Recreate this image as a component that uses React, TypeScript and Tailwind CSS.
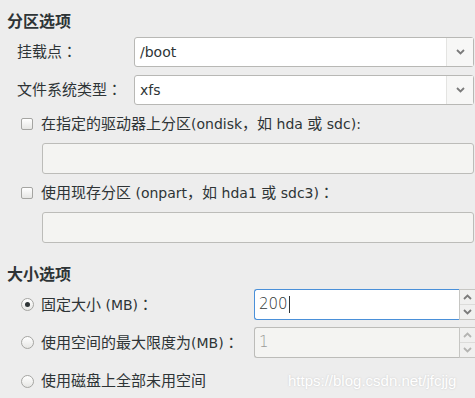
import React from 'react'

const font = { fontFamily: '"DejaVu Sans", "Noto Sans CJK SC", sans-serif' }
const cjkFont = { fontFamily: '"Noto Sans CJK SC", sans-serif' }
const colonFont = { fontFamily: '"Noto Sans CJK JP", sans-serif' }

const CJK = /([\u3000-\u303f\u4e00-\u9fff\uff00-\uffef]+)/

// CJK runs at 15px, latin runs a bit smaller, like the original GTK rendering
function Txt({ children }: { children: string }) {
  const parts = children.split(CJK).filter(Boolean)
  return (
    <span className="whitespace-pre">
      {parts.map((p, i) => {
        if (!CJK.test(p)) return <span key={i} className="text-[14px]">{p}</span>
        // full-width colon sits centred in its box in the original
        return p.split(/(：)/).filter(Boolean).map((q, j) => (
          <span key={`${i}-${j}`} className="text-[15px]" style={q === '：' ? colonFont : cjkFont}>
            {q}
          </span>
        ))
      })}
    </span>
  )
}

function Chevron({ up = false, color = '#7b7b7b' }: { up?: boolean; color?: string }) {
  return (
    <svg width="9" height="6" viewBox="0 0 9 6" className="block">
      <path d={up ? 'M1 5 L4.5 1.5 L8 5' : 'M1 1 L4.5 4.5 L8 1'} fill="none" stroke={color} strokeWidth="1.8" />
    </svg>
  )
}

function Combo({ value }: { value: string }) {
  return (
    <div className="flex h-[30px] w-[340px] rounded-[3px] border border-[#b8b8b5] bg-white">
      <div className="flex flex-1 items-center pl-[5px] text-[14px] text-[#2e3436]">{value}</div>
      <div className="flex w-[27px] items-center justify-center border-l border-[#e4e4e2] bg-[#f7f7f6]">
        <Chevron />
      </div>
    </div>
  )
}

function CheckBox() {
  return (
    <div className="h-[12px] w-[12px] rounded-[2px] border border-[#a5a5a2] bg-gradient-to-b from-white to-[#e6e6e4]" />
  )
}

function Radio({ checked = false }: { checked?: boolean }) {
  return (
    <div className="flex h-[13px] w-[13px] items-center justify-center rounded-full border border-[#a5a5a2] bg-gradient-to-b from-white to-[#e6e6e4]">
      {checked && <div className="h-[5px] w-[5px] rounded-full bg-[#2e3436]" />}
    </div>
  )
}

function Spin({ value, focused = false }: { value: string; focused?: boolean }) {
  const arrow = focused ? '#7b7b7b' : '#b4b4b2'
  return (
    <div className="flex h-[31px] w-[221px]">
      <div
        className={
          focused
            ? 'flex flex-1 items-center rounded-l-[3px] border border-r-0 border-[#4a90d9] bg-white pl-[4px] text-[15px] font-light text-[#2e3436]'
            : 'flex flex-1 items-center rounded-l-[3px] border border-r-0 border-[#bcbcb9] bg-[#f4f4f2] pl-[4px] text-[15px] font-light text-[#9a9a98]'
        }
      >
        {value}
        {focused && <span className="ml-[1px] inline-block h-[17px] w-[1px] bg-[#2e3436]" />}
      </div>
      <div className="flex w-[16px] flex-col border-y border-l border-[#c6c6c3] bg-[#f0f0ef]">
        <div className="flex flex-1 items-center justify-center border-b border-[#dcdcda]">
          <Chevron up color={arrow} />
        </div>
        <div className="flex flex-1 items-center justify-center">
          <Chevron color={arrow} />
        </div>
      </div>
    </div>
  )
}

export default function App() {
  return (
    <div className="relative h-[398px] w-[475px] overflow-hidden bg-[#ededed] text-[#2e3436]" style={font}>
      <div className="flex flex-col pt-[8px]">
        <div className="flex h-[24px] items-center pl-[7px] text-[16px] font-bold" style={cjkFont}>
          分区选项
        </div>

        <div className="mt-[5px] flex items-center">
          <div className="w-[134px] pl-[17px]">
            <Txt>挂载点：</Txt>
          </div>
          <Combo value="/boot" />
        </div>
        <div className="mt-[8px] flex items-center">
          <div className="w-[134px] pl-[17px]">
            <Txt>文件系统类型：</Txt>
          </div>
          <Combo value="xfs" />
        </div>

        <div className="flex h-[38px] items-center pl-[21px]">
          <CheckBox />
          <span className="ml-[8px]">
            <Txt>在指定的驱动器上分区(ondisk，如 hda 或 sdc):</Txt>
          </span>
        </div>
        <div className="ml-[42px] h-[31px] w-[432px] rounded-[3px] border border-[#bcbcb9] bg-[#f4f4f2]" />

        <div className="flex h-[38px] items-center pl-[21px]">
          <CheckBox />
          <span className="ml-[8px]">
            <Txt>使用现存分区 (onpart，如 hda1 或 sdc3)：</Txt>
          </span>
        </div>
        <div className="ml-[42px] h-[31px] w-[432px] rounded-[3px] border border-[#bcbcb9] bg-[#f4f4f2]" />

        <div className="mt-[18px] flex h-[24px] items-center pl-[7px] text-[16px] font-bold" style={cjkFont}>
          大小选项
        </div>

        <div className="mt-[4px] flex items-center">
          <div className="flex w-[254px] items-center pl-[21px]">
            <Radio checked />
            <span className="ml-[7px]">
              <Txt>固定大小 (MB)：</Txt>
            </span>
          </div>
          <Spin value="200" focused />
        </div>
        <div className="mt-[7px] flex items-center">
          <div className="flex w-[254px] items-center pl-[21px]">
            <Radio />
            <span className="ml-[7px]">
              <Txt>使用空间的最大限度为(MB)：</Txt>
            </span>
          </div>
          <Spin value="1" />
        </div>
        <div className="mt-[12px] flex h-[22px] items-center pl-[21px]">
          <Radio />
          <span className="ml-[7px]">
            <Txt>使用磁盘上全部未用空间</Txt>
          </span>
        </div>
      </div>

      <div
        className="absolute left-[288px] top-[370px] text-[15px] text-white [text-shadow:0_0_2px_#c8c8c8]"
        style={{ fontFamily: '"Liberation Sans", Arial, sans-serif' }}
      >
        https://blog.csdn.net/jfcjjg
      </div>
    </div>
  )
}
